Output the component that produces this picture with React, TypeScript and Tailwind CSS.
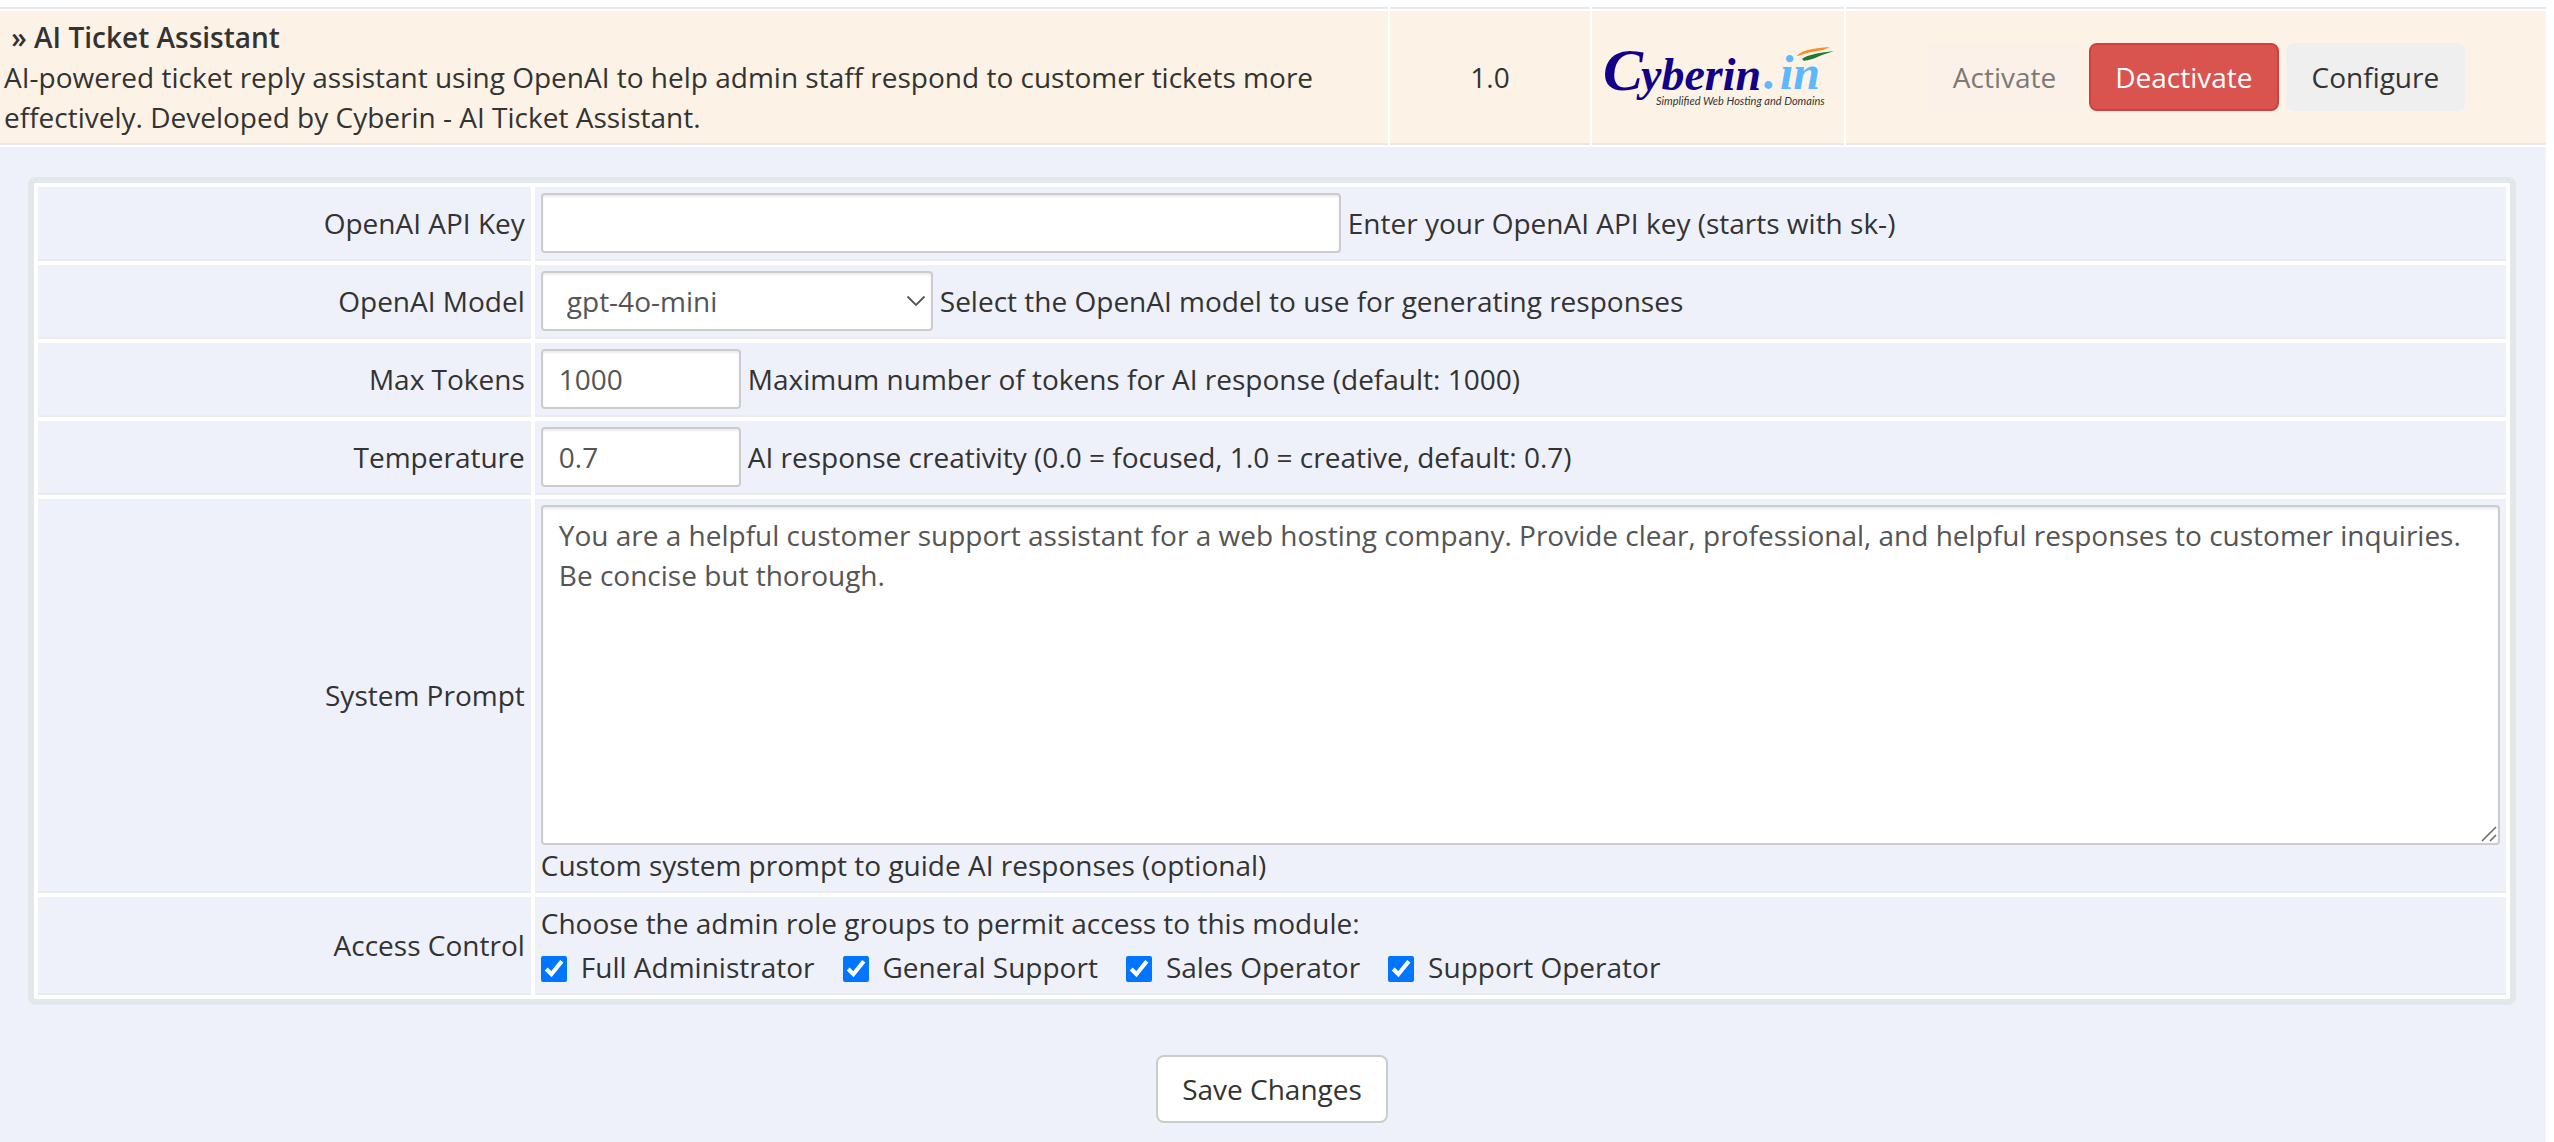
import React from "react";

const cell = "border-b-2 border-[#e8e8e8] bg-[#fcf3e6]";
const panelCell = "border-b-2 border-[#ebebeb] bg-[#eef1fa] p-1.5";
const field =
  "rounded-[4px] border-2 border-[#cccccc] bg-white px-4 text-[#555555] shadow-[inset_0_2px_2px_rgba(0,0,0,0.075)] outline-none";

function Logo() {
  return (
    <svg
      viewBox="0 0 240 70"
      width="240"
      height="70"
      role="img"
      aria-label="Cyberin.in"
      className="mx-auto block overflow-visible"
    >
      <g fontFamily="'Liberation Serif', serif" fontStyle="italic" fontWeight="bold">
        <text y="48" fill="#10008a">
          <tspan x="5" fontSize="60">C</tspan>
          <tspan x="43" fontSize="46">yberin</tspan>
        </text>
        <text y="47" fontSize="48" fill="#5cb8ff">
          <tspan x="166">.</tspan>
          <tspan x="182">in</tspan>
        </text>
      </g>
      <text
        x="58"
        y="63"
        fontSize="11"
        fontStyle="italic"
        fontFamily="Lato, sans-serif"
        fill="#333333"
      >
        Simplified Web Hosting and Domains
      </text>
      <path d="M199 14 C202 9 214 6 232 5 L225 8 C216 9 208 11 200 14Z" fill="#ff8a24" />
      <path d="M204 17 C209 13 220 11 236 9 L224 13 C216 17 210 18 206 19Z" fill="#1f7a35" />
    </svg>
  );
}

function Row({ label, id, children }: { label: string; id?: string; children: React.ReactNode }) {
  return (
    <tr>
      <td className={`${panelCell} w-1/5 text-right`}>
        {id ? <label htmlFor={id}>{label}</label> : label}
      </td>
      <td className={panelCell}>{children}</td>
    </tr>
  );
}

const roles = ["Full Administrator", "General Support", "Sales Operator", "Support Operator"];

export default function App() {
  return (
    <div className="overflow-hidden bg-white pr-2 font-['Open_Sans',sans-serif] text-[28px] leading-[40px] text-[#333333]">
      <table className="-mx-0.5 -mb-0.5 w-[calc(100%+4px)] table-fixed border-separate border-spacing-0.5">
        <colgroup>
          <col />
          <col className="w-[200px]" />
          <col className="w-[252px]" />
          <col className="w-[700px]" />
        </colgroup>
        <tbody>
          <tr aria-hidden="true">
            <td className="h-[7px] border-b-2 border-[#e8e8e8] p-0" />
            <td className="border-b-2 border-[#e8e8e8] p-0" />
            <td className="border-b-2 border-[#e8e8e8] p-0" />
            <td className="border-b-2 border-[#e8e8e8] p-0" />
          </tr>
          <tr>
            <td className={`${cell} px-1 py-1.5`}>
              <b className="font-semibold">&nbsp;» AI Ticket Assistant</b>
              <br />
              AI-powered ticket reply assistant using OpenAI to help admin staff respond to customer
              tickets more effectively. Developed by Cyberin - AI Ticket Assistant.
            </td>
            <td className={`${cell} text-center`}>1.0</td>
            <td className={`${cell} p-0`}>
              <Logo />
            </td>
            <td className={cell}>
              <div className="flex justify-center gap-[7px]">
                <button
                  type="button"
                  disabled
                  className="h-[68px] rounded-lg bg-[#fbf1e8] px-[26px] text-[#7c7a76]"
                >
                  Activate
                </button>
                <button
                  type="button"
                  className="h-[68px] rounded-lg border-2 border-[#d43f3a] bg-[#d9534f] px-6 text-white"
                >
                  Deactivate
                </button>
                <button type="button" className="h-[68px] rounded-lg bg-[#efefef] px-[26px]">
                  Configure
                </button>
              </div>
            </td>
          </tr>
          <tr>
            <td colSpan={4} className="bg-[#eef1fa] pt-[30px] pr-[30px] pb-[19px] pl-7">
              <form onSubmit={(e) => e.preventDefault()}>
                <table className="w-full table-fixed border-separate border-spacing-1 rounded-lg border-6 border-[#e2e7e9] bg-white">
                  <tbody>
                    <Row label="OpenAI API Key" id="key">
                      <div className="flex items-center gap-[7px]">
                        <input id="key" type="text" className={`${field} h-[60px] w-[800px]`} />
                        Enter your OpenAI API key (starts with sk-)
                      </div>
                    </Row>
                    <Row label="OpenAI Model" id="model">
                      <div className="flex items-center gap-[7px]">
                        <div className="relative">
                          <select
                            id="model"
                            className={`${field} block h-[60px] w-[392px] appearance-none pl-6`}
                          >
                            <option>gpt-4o-mini</option>
                          </select>
                          <svg
                            viewBox="0 0 20 12"
                            className="pointer-events-none absolute top-6 right-[7px] h-3 w-5"
                            fill="none"
                            stroke="#555555"
                            strokeWidth="1.800"
                          >
                            <path d="M1.500 1.500 10 10 18.500 1.500" />
                          </svg>
                        </div>
                        Select the OpenAI model to use for generating responses
                      </div>
                    </Row>
                    <Row label="Max Tokens" id="tokens">
                      <div className="flex items-center gap-[7px]">
                        <input
                          id="tokens"
                          type="text"
                          defaultValue="1000"
                          className={`${field} h-[60px] w-[200px]`}
                        />
                        Maximum number of tokens for AI response (default: 1000)
                      </div>
                    </Row>
                    <Row label="Temperature" id="temperature">
                      <div className="flex items-center gap-[7px]">
                        <input
                          id="temperature"
                          type="text"
                          defaultValue="0.7"
                          className={`${field} h-[60px] w-[200px]`}
                        />
                        AI response creativity (0.0 = focused, 1.0 = creative, default: 0.7)
                      </div>
                    </Row>
                    <Row label="System Prompt" id="prompt">
                      <div className="relative">
                        <textarea
                          id="prompt"
                          defaultValue="You are a helpful customer support assistant for a web hosting company. Provide clear, professional, and helpful responses to customer inquiries. Be concise but thorough."
                          className={`${field} block h-[340px] w-full resize-none py-2`}
                        />
                        <svg
                          viewBox="0 0 16 16"
                          className="pointer-events-none absolute right-[3px] bottom-[3px] size-4"
                          stroke="#666666"
                          strokeWidth="1.500"
                        >
                          <path d="M1 15 15 1M9 15l6-6" />
                        </svg>
                      </div>
                      Custom system prompt to guide AI responses (optional)
                    </Row>
                    <Row label="Access Control">
                      Choose the admin role groups to permit access to this module:
                      <div className="flex gap-7">
                        {roles.map((role) => (
                          <label key={role} className="flex items-center gap-3.5">
                            <input
                              type="checkbox"
                              defaultChecked
                              className="mt-2 size-[26px] accent-[#0075ff]"
                            />
                            <span className="pt-1">{role}</span>
                          </label>
                        ))}
                      </div>
                    </Row>
                  </tbody>
                </table>
                <div className="mt-[50px] flex justify-center">
                  <button
                    type="submit"
                    className="h-[68px] rounded-lg border-2 border-[#cccccc] bg-white px-6"
                  >
                    Save Changes
                  </button>
                </div>
              </form>
            </td>
          </tr>
        </tbody>
      </table>
    </div>
  );
}
